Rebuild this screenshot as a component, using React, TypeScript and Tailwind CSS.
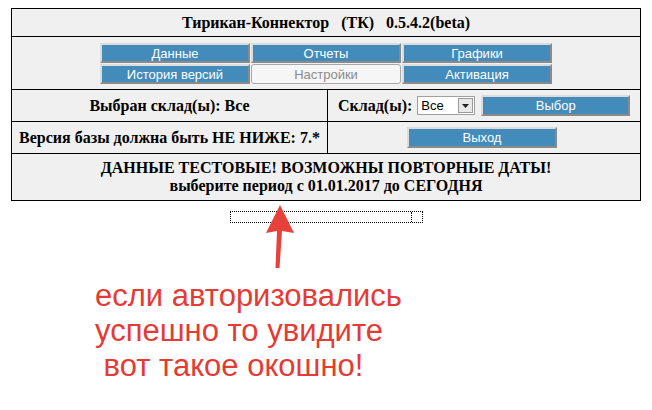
import { ReactNode } from "react";

const serif = "font-['Liberation_Serif',serif]";
const sans = "font-['Liberation_Sans',Arial,sans-serif]";

function BlueButton({ children, className = "" }: { children: ReactNode; className?: string }) {
  return (
    <div
      className={`flex items-center justify-center bg-[#428bba] text-white text-[13px] leading-none border-2 border-t-[#dcdcdc] border-l-[#dcdcdc] border-b-[#8a8a8a] border-r-[#8a8a8a] ${sans} ${className}`}
    >
      {children}
    </div>
  );
}

export default function App() {
  return (
    <div className="w-[652px] h-[410px] bg-white overflow-hidden relative">
      <div className="pt-[8px] pl-[11px]">
        <div className={`w-[630px] border border-black bg-[#f0f0f0] text-black ${serif}`}>
          {/* title */}
          <div className="h-[28px] flex items-center justify-center font-bold text-[16px] whitespace-pre border-b border-black">
            Тирикан-Коннектор   (ТК)   0.5.4.2(beta)
          </div>

          {/* menu */}
          <div className="h-[53px] border-b border-black flex justify-center pt-[6px]">
            <div className="grid grid-cols-[150px_150px_150px] gap-x-[1px] gap-y-[1px] h-[41px]">
              <BlueButton>Данные</BlueButton>
              <BlueButton>Отчеты</BlueButton>
              <BlueButton>Графики</BlueButton>
              <BlueButton>История версий</BlueButton>
              <div
                className={`flex items-center justify-center bg-[#f6f6f6] text-[#8a8a8a] text-[13px] leading-none border border-[#a9a9a9] rounded-[3px] ${sans}`}
              >
                Настройки
              </div>
              <BlueButton>Активация</BlueButton>
            </div>
          </div>

          {/* store */}
          <div className="h-[32px] border-b border-black grid grid-cols-[316px_1fr]">
            <div className="border-r border-black flex items-center justify-center font-bold text-[16px]">
              Выбран склад(ы): Все
            </div>
            <div className="flex items-center pl-[10px]">
              <span className="font-bold text-[16px] whitespace-nowrap">Склад(ы):</span>
              <div className={`ml-[5px] w-[58px] h-[19px] shrink-0 bg-white border border-[#a0a0a0] flex items-center ${sans}`}>
                <span className="flex-1 pl-[3px] text-[13px] leading-none">Все</span>
                <span className="w-[15px] h-[15px] mr-[1px] bg-[#e8e8e8] border border-[#9a9a9a] flex items-center justify-center">
                  <svg width="7" height="4" viewBox="0 0 7 4">
                    <path d="M0 0h7L3.5 4z" fill="#222" />
                  </svg>
                </span>
              </div>
              <BlueButton className="w-[149px] h-[21px] ml-[6px] shrink-0">Выбор</BlueButton>
            </div>
          </div>

          {/* version */}
          <div className="h-[32px] border-b border-black grid grid-cols-[316px_1fr]">
            <div className="border-r border-black flex items-center justify-center font-bold text-[16px] whitespace-nowrap">
              Версия базы должна быть НЕ НИЖЕ: 7.*
            </div>
            <div className="flex items-center justify-center pr-[4px]">
              <BlueButton className="w-[150px] h-[21px]">Выход</BlueButton>
            </div>
          </div>

          {/* warning */}
          <div className="h-[46px] flex flex-col items-center justify-center font-bold text-[16px] leading-[18px]">
            <div>ДАННЫЕ ТЕСТОВЫЕ! ВОЗМОЖНЫ ПОВТОРНЫЕ ДАТЫ!</div>
            <div>выберите период с 01.01.2017 до СЕГОДНЯ</div>
          </div>
        </div>

        {/* empty progress box */}
        <div className="ml-[219px] mt-[10px] w-[193px] h-[12px] border border-dotted border-black flex">
          <div className="flex-1" />
          <div className="w-[11px] border-l border-dotted border-black" />
        </div>
      </div>

      {/* arrow annotation */}
      <svg className="absolute left-[260px] top-[200px]" width="40" height="72" viewBox="0 0 40 72">
        <path d="M20 5 L34 33 L22 31 L19.5 68 L15.5 68 L17 31 L6 33 Z" fill="#e8403a" />
      </svg>

      <div className={`pl-[95px] pt-[55px] text-[#e53b35] text-[31px] leading-[35px] whitespace-pre ${sans}`}>
        <div>если авторизовались</div>
        <div>успешно то увидите</div>
        <div> вот такое окошно!</div>
      </div>
    </div>
  );
}
